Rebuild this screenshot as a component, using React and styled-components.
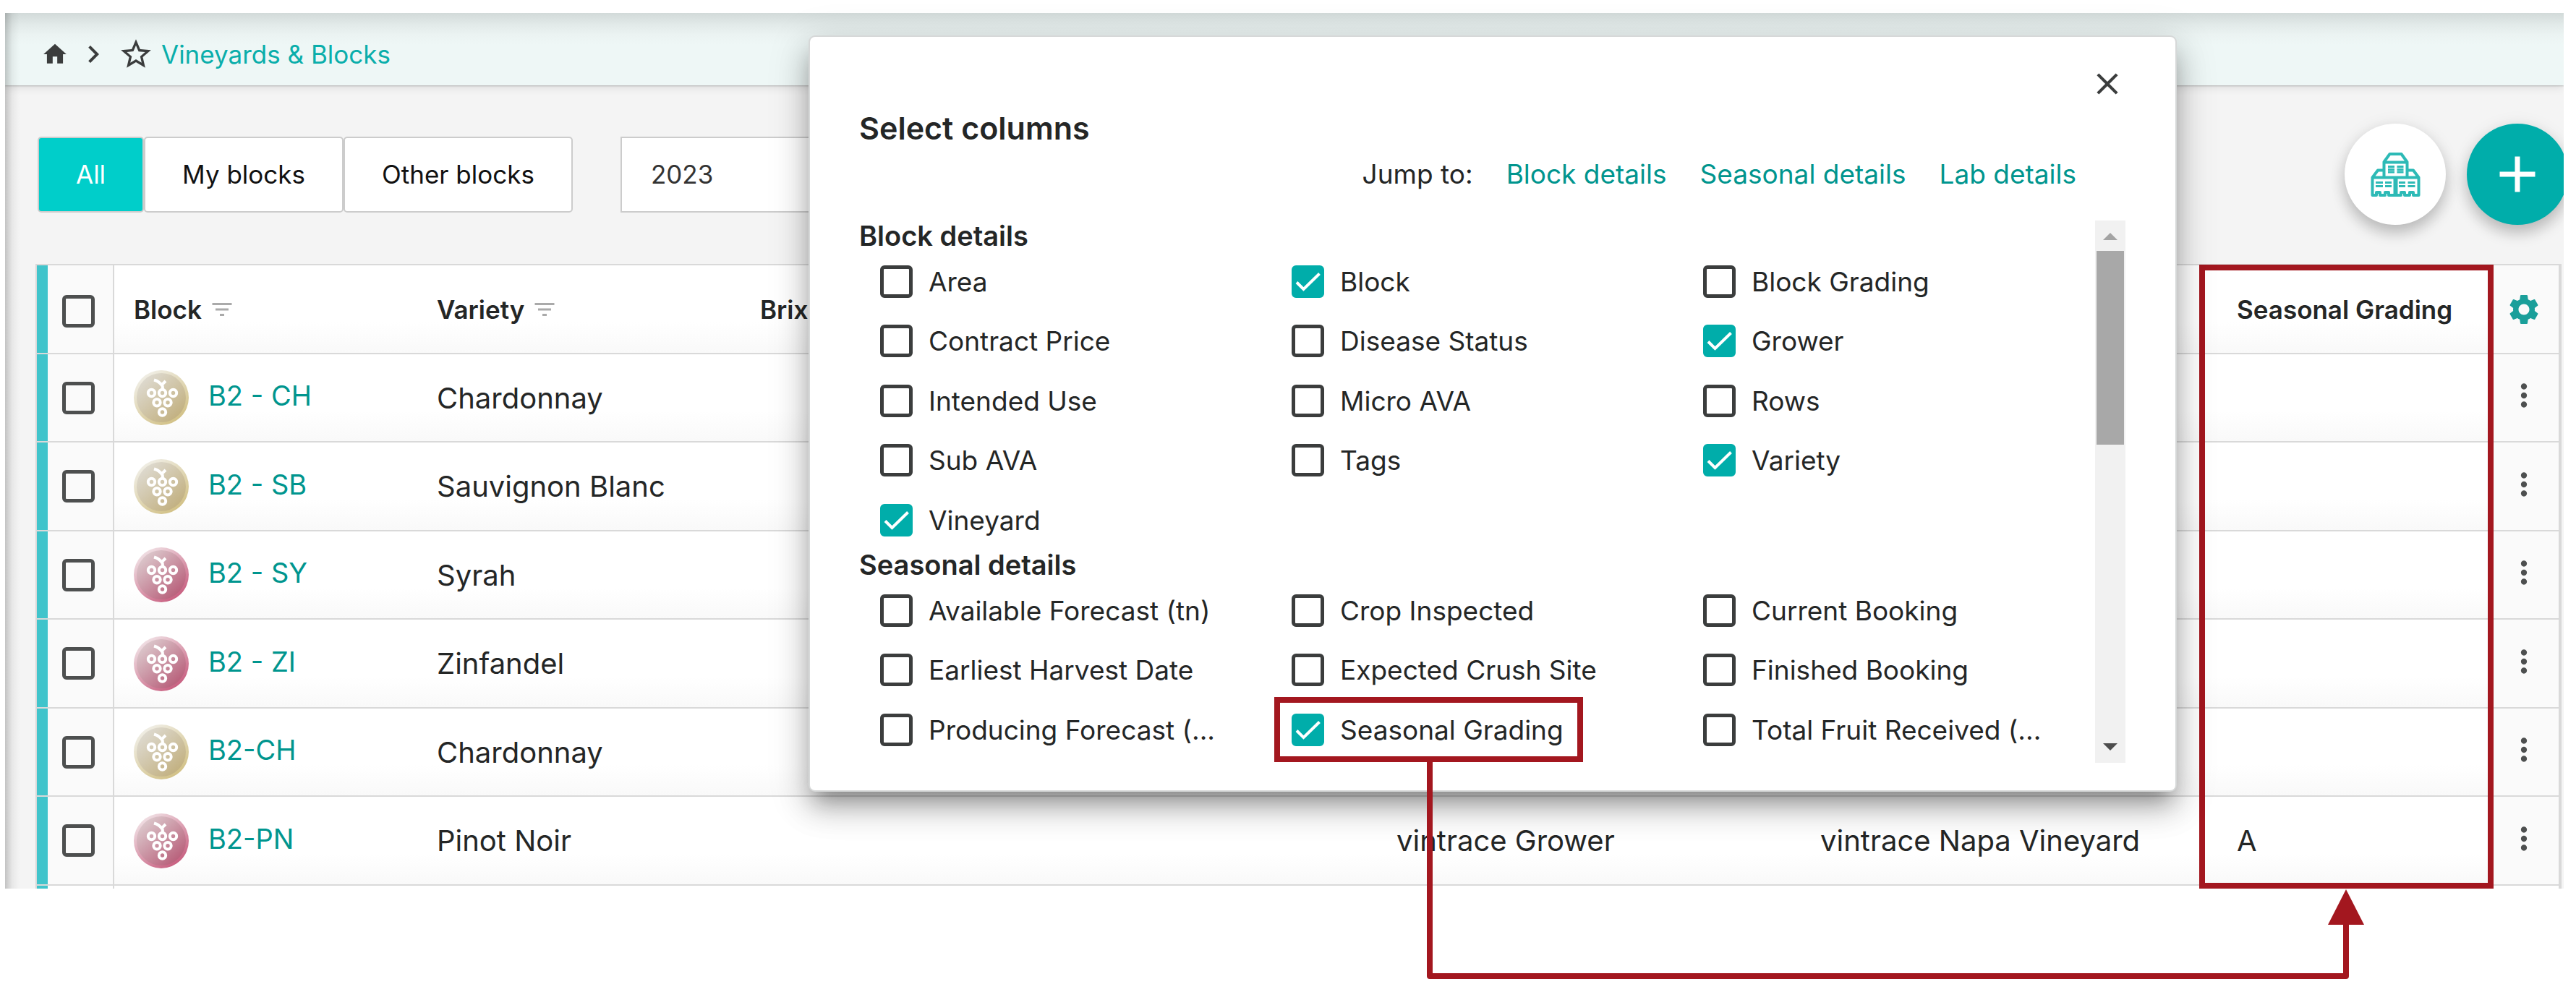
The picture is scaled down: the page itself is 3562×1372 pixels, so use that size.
import React, { useState } from 'react';
import styled, { createGlobalStyle } from 'styled-components';
import { MdHome, MdChevronRight, MdStarBorder, MdFilterList, MdSettings, MdMoreVert, MdClose, MdAdd } from 'react-icons/md';

const GlobalStyle = createGlobalStyle`
  * { box-sizing: border-box; }
  body { margin: 0; background: #fff; color: #242626; font-family: Inter, 'Open Sans', sans-serif; font-size: 37px; }
  button, select, input { font: inherit; color: inherit; margin: 0; }
  a { color: #00958e; text-decoration: none; }
  svg { display: block; flex: none; }
`;

const Page = styled.div`position: relative; padding: 18px 17px 143px 7px;`;
const Screen = styled.div`
  position: relative; overflow: hidden; background: #f4f4f4;
  &::after { content: ''; position: absolute; inset: 0 auto 0 0; width: 20px; pointer-events: none; background: linear-gradient(to right, rgba(0, 0, 0, 0.2), rgba(0, 0, 0, 0.05) 50%, transparent); }
`;

// --- BREADCRUMB BAR ---
const TopBar = styled.nav`
  display: flex; align-items: center; gap: 10px; height: 100px; padding: 14px 50px 0; color: #3b3d3d; font-size: 35px;
  background: linear-gradient(#d2dad9, #e2eae9 16px, #ebf3f2 30px, #eef7f6 44px);
  box-shadow: 0 1px 2px rgba(0, 0, 0, 0.2), 0 2px 12px rgba(0, 0, 0, 0.12);
`;
const CrumbLink = styled.a`color: ${({ $muted }) => ($muted ? '#3b3d3d' : '#0aaeab')};`;

// --- TOOLBAR ---
const Toolbar = styled.div`display: flex; align-items: center; padding: 53px 0 54px 45px;`;
const Segments = styled.div`display: flex; margin-right: 66px;`;
const Segment = styled.button`
  height: 105px; padding: 0 51px; border: 2px solid #ccc; border-radius: 5px; font-size: 35px;
  background: ${({ $active }) => ($active ? '#00ceca' : '#fff')};
  color: ${({ $active }) => ($active ? '#fff' : '#111')};
`;
const YearSelect = styled.select`appearance: none; width: 520px; height: 105px; padding: 0 40px; border: 2px solid #ccc; border-radius: 0; background: #fff; font-size: 35px; color: #333;`;
const Fabs = styled.div`display: flex; gap: 29px; margin-left: auto; margin-right: -6px;`;
const Fab = styled.button`
  display: flex; align-items: center; justify-content: center; width: 140px; height: 140px; padding: 0; border: 0; border-radius: 50%; color: #fff;
  background: ${({ $primary }) => ($primary ? '#00adaa' : '#fff')};
  box-shadow: 0 12px 20px rgba(0, 0, 0, 0.2), 0 2px 24px rgba(0, 0, 0, 0.08);
`;

// --- TABLE ---
const TableArea = styled.div`position: relative; margin: 0 3px 0 42px;`;
const Table = styled.table`width: 100%; table-layout: fixed; border-collapse: separate; border-spacing: 0; border: 2px solid #d9d9d9; border-right-width: 4px; border-bottom: 0;`;
const Row = styled.tr`height: ${({ $head }) => ($head ? 123 : 122)}px; &:nth-child(even) { height: 123px; }`;
const Cell = styled.td`
  padding: 0 0 0 27px; text-align: left; white-space: nowrap; border-bottom: 2px solid #d9d9d9; font-size: 40px;
  background: linear-gradient(#fff 65%, #f9f9f9);
`;
const HeadCell = styled(Cell)`font-size: 35px; font-weight: 600;`;
const CheckCell = styled.td`padding: ${({ $head }) => ($head ? 6 : 0)}px 0 0 35px; background: #fafafa; border: solid #d9d9d9; border-width: 0 2px 2px 0; box-shadow: inset 15px 0 #40c4cb;`;
const ActionCell = styled.td`padding: 0 0 ${({ $head }) => ($head ? 0 : 6)}px; background: #fafafa; border-bottom: 2px solid #d9d9d9;`;
const EdgeRow = styled.tr`height: 4px; td { border-bottom: 0; padding: 0; background: #fff; }`;
const HeadLabel = styled.div`display: flex; align-items: center; gap: 10px; svg { color: #aaa; }`;
const BlockName = styled.div`display: flex; align-items: center; gap: 27px; font-size: 38px; a { padding-bottom: 6px; }`;
const IconButton = styled.button`display: flex; align-items: center; justify-content: center; width: 50px; height: 50px; margin: 0 auto; padding: 0; border: 0; background: none; color: ${({ $color }) => $color || '#4d4f4f'};`;
const ColumnOutline = styled.div`position: absolute; top: 1px; right: 94px; bottom: 0; width: 407px; border: 8px solid #a3171f; pointer-events: none;`;

// --- CHECKBOX ---
const TickWrap = styled.span`display: grid; flex: none; width: 45px; > * { grid-area: 1 / 1; } svg { pointer-events: none; }`;
const TickInput = styled.input`
  appearance: none; width: 45px; height: 45px; border: 5px solid ${({ $soft }) => ($soft ? '#4d4f4f' : '#3b3d3d')}; border-radius: 6px; background: transparent;
  &:checked { background: #00adaa; border-color: #00adaa; }
`;

// --- DIALOG ---
const Dialog = styled.section`
  position: absolute; top: 49px; left: 1118px; right: 552px; padding: 40px 69px 38px 68px; background: #fff; border: 2px solid #d6d8d8; border-radius: 9px;
  box-shadow: 0 20px 26px -12px rgba(0, 0, 0, 0.3), 0 24px 40px 2px rgba(0, 0, 0, 0.18), 0 12px 56px 6px rgba(0, 0, 0, 0.12);
`;
const DialogTop = styled.div`display: flex; justify-content: flex-end; ${IconButton} { margin: 0; }`;
const DialogTitle = styled.h2`margin: 12px 0 0; font-size: 43px; line-height: 48px; font-weight: 600;`;
const JumpRow = styled.div`display: flex; justify-content: flex-end; gap: 46px; margin-top: 18px; padding-right: 68px; line-height: 44px;`;
const DialogBody = styled.div`display: flex; justify-content: space-between; margin-top: 42px;`;
const Groups = styled.div`flex: 1;`;
const GroupTitle = styled.h3`margin: 0; font-size: 38px; line-height: 43px; font-weight: 600;`;
const OptionGrid = styled.div`display: grid; grid-template-columns: 569px 569px 1fr; grid-auto-rows: 82px 83px; padding-left: 29px;`;
const Option = styled.label`display: flex; align-items: center; gap: 22px; position: relative; white-space: nowrap;`;
const OptionOutline = styled.span`position: absolute; top: -4px; bottom: -4px; left: -24px; width: 427px; border: 8px solid #a3171f; pointer-events: none;`;
const ScrollTrack = styled.div`display: flex; flex-direction: column; align-items: center; width: 42px; height: 750px; padding: 17px 2px; background: #f1f1f1;`;
const ScrollThumb = styled.div`align-self: stretch; height: 268px; margin: 15px 0 auto; background: #a8a8a8;`;

const Connector = styled.svg`position: absolute; top: 1054px; left: 1973px; pointer-events: none;`;

const rows = [
  { name: 'B2 - CH', variety: 'Chardonnay', white: true },
  { name: 'B2 - SB', variety: 'Sauvignon Blanc', white: true },
  { name: 'B2 - SY', variety: 'Syrah' },
  { name: 'B2 - ZI', variety: 'Zinfandel' },
  { name: 'B2-CH', variety: 'Chardonnay', white: true },
  { name: 'B2-PN', variety: 'Pinot Noir', grower: 'vintrace Grower', vineyard: 'vintrace Napa Vineyard', grading: 'A' },
];

const groups = [
  {
    title: 'Block details',
    options: ['Area', 'Block', 'Block Grading', 'Contract Price', 'Disease Status', 'Grower', 'Intended Use', 'Micro AVA', 'Rows', 'Sub AVA', 'Tags', 'Variety', 'Vineyard'],
  },
  {
    title: 'Seasonal details',
    options: ['Available Forecast (tn)', 'Crop Inspected', 'Current Booking', 'Earliest Harvest Date', 'Expected Crush Site', 'Finished Booking', 'Producing Forecast (...', 'Seasonal Grading', 'Total Fruit Received (...'],
  },
];

const Tick = ({ checked, ...props }) => (
  <TickWrap>
    <TickInput type="checkbox" checked={checked} {...props} />
    {checked && (
      <svg width="45" height="45" viewBox="0 0 45 45" fill="none" stroke="#fff" strokeWidth="4">
        <path d="M7 23.5 16.5 33 38.5 11.5" />
      </svg>
    )}
  </TickWrap>
);

const GrapeIcon = ({ white }) => {
  const id = white ? 'grape-white' : 'grape-red';
  const [from, to, rimFrom, rimTo] = white ? ['#dedad0', '#c2b080', '#f0eee6', '#d2c186'] : ['#dcc8cc', '#b85f7a', '#f0e0e4', '#c85f80'];
  return (
    <svg width="76" height="76" viewBox="0 0 76 76">
      <defs>
        <linearGradient id={id} x1="0.15" y1="0.1" x2="0.85" y2="0.9"><stop stopColor={from} /><stop offset="1" stopColor={to} /></linearGradient>
        <linearGradient id={`${id}-rim`} x1="0.15" y1="0.1" x2="0.75" y2="0.95"><stop stopColor={rimFrom} /><stop offset="1" stopColor={rimTo} /></linearGradient>
      </defs>
      <circle cx="38" cy="38" r="38" fill={`url(#${id}-rim)`} />
      <circle cx="38" cy="38" r="34" fill={`url(#${id})`} />
      <g fill="none" stroke="#fff" strokeWidth="4">
        <path d="M28 13.500C33 15 36 17 38.500 20.500L44 15M38.500 19C39.500 21 40 23 40 26" />
        <circle cx="24.500" cy="31.500" r="4.700" />
        <circle cx="39.500" cy="31.500" r="4.700" />
        <circle cx="54.500" cy="31.500" r="4.700" />
        <circle cx="32" cy="44.700" r="4.700" />
        <circle cx="47" cy="44.700" r="4.700" />
        <circle cx="39.500" cy="58" r="4.700" />
      </g>
    </svg>
  );
};

const WineryIcon = () => (
  <svg width="69" height="61" viewBox="0 0 69 61" fill="none" stroke="#2dbab6" strokeWidth="4" strokeLinejoin="round">
    <path d="M18.500 33V13L26.500 2H42.500L50.500 13V33M18.500 13.500H50.500" />
    <path d="M18 24.500H10L2.500 34.500V59H8V55H13V59H20V55H25V59H42V55H47V59H54V55H59V59H66.500V34.500L59 24.500H51M2.500 34.500H66.500" />
    <path d="M34.500 34V59" strokeWidth="6" />
    <path d="M24 19.500H33M24 23.500H33M24 27H33M36.500 19.500H45.500M36.500 23.500H45.500M36.500 27H45.500" strokeWidth="3" />
    <path d="M7 41.500H17M20 41.500H29M7 46.500H17M20 46.500H29M39 41.500H48M51.500 41.500H61.500M39 46.500H48M51.500 46.500H61.500" strokeWidth="3" />
  </svg>
);

const Arrow = ({ up }) => (
  <svg width="20" height="10" viewBox="0 0 20 10" fill={up ? '#a3a3a3' : '#4d4d4d'}>
    <path d={up ? 'M0 10 10 0 20 10Z' : 'M0 0H20L10 10Z'} />
  </svg>
);

const App = () => {
  const [segment, setSegment] = useState('All');
  const [columns, setColumns] = useState(['Block', 'Grower', 'Variety', 'Vineyard', 'Seasonal Grading']);
  const [picked, setPicked] = useState([]);

  const flip = (list, item) => (list.includes(item) ? list.filter((x) => x !== item) : [...list, item]);

  return (
    <>
      <GlobalStyle />
      <Page>
        <Screen>
          <TopBar>
            <CrumbLink href="#home" aria-label="Home" $muted><MdHome size={38} /></CrumbLink>
            <MdChevronRight size={48} />
            <MdStarBorder size={50} />
            <CrumbLink href="#blocks">Vineyards &amp; Blocks</CrumbLink>
          </TopBar>

          <Toolbar>
            <Segments>
              {['All', 'My blocks', 'Other blocks'].map((label) => (
                <Segment key={label} type="button" $active={segment === label} onClick={() => setSegment(label)}>{label}</Segment>
              ))}
            </Segments>
            <YearSelect aria-label="Vintage" defaultValue="2023"><option>2023</option></YearSelect>
            <Fabs>
              <Fab type="button" aria-label="Wineries"><WineryIcon /></Fab>
              <Fab type="button" aria-label="Add block" $primary><MdAdd size={84} /></Fab>
            </Fabs>
          </Toolbar>

          <TableArea>
            <Table>
              <colgroup>
                <col width="107" /><col width="419" /><col width="447" /><col /><col width="586" /><col width="576" /><col width="375" /><col width="97" />
              </colgroup>
              <thead>
                <Row $head>
                  <CheckCell $head as="th">
                    <Tick $soft aria-label="Select all blocks" checked={picked.length === rows.length} onChange={() => setPicked(picked.length === rows.length ? [] : rows.map((r) => r.name))} />
                  </CheckCell>
                  <HeadCell as="th"><HeadLabel>Block <MdFilterList size={36} /></HeadLabel></HeadCell>
                  <HeadCell as="th"><HeadLabel>Variety <MdFilterList size={36} /></HeadLabel></HeadCell>
                  <HeadCell as="th">Brix</HeadCell>
                  <HeadCell />
                  <HeadCell />
                  <HeadCell as="th">Seasonal Grading</HeadCell>
                  <ActionCell $head><IconButton type="button" aria-label="Table settings" $color="#1a9f9a"><MdSettings size={50} /></IconButton></ActionCell>
                </Row>
              </thead>
              <tbody>
                {rows.map((row) => (
                  <Row key={row.name}>
                    <CheckCell>
                      <Tick $soft aria-label={`Select ${row.name}`} checked={picked.includes(row.name)} onChange={() => setPicked(flip(picked, row.name))} />
                    </CheckCell>
                    <Cell><BlockName><GrapeIcon white={row.white} /><a href="#block">{row.name}</a></BlockName></Cell>
                    <Cell>{row.variety}</Cell>
                    <Cell />
                    <Cell>{row.grower}</Cell>
                    <Cell>{row.vineyard}</Cell>
                    <Cell>{row.grading}</Cell>
                    <ActionCell><IconButton type="button" aria-label={`Actions for ${row.name}`}><MdMoreVert size={50} /></IconButton></ActionCell>
                  </Row>
                ))}
                <EdgeRow><CheckCell /><td colSpan={6} /><ActionCell /></EdgeRow>
              </tbody>
            </Table>
            <ColumnOutline />
          </TableArea>
        </Screen>

        <Dialog role="dialog" aria-labelledby="columns-title">
          <DialogTop>
            <IconButton type="button" aria-label="Close" $color="#3b3d3d"><MdClose size={50} /></IconButton>
          </DialogTop>
          <DialogTitle id="columns-title">Select columns</DialogTitle>
          <JumpRow>
            <span>Jump to:</span>
            <a href="#block-details">Block details</a>
            <a href="#seasonal-details">Seasonal details</a>
            <a href="#lab-details">Lab details</a>
          </JumpRow>
          <DialogBody>
            <Groups>
              {groups.map((group) => (
                <React.Fragment key={group.title}>
                  <GroupTitle>{group.title}</GroupTitle>
                  <OptionGrid>
                    {group.options.map((name) => (
                      <Option key={name}>
                        <Tick checked={columns.includes(name)} onChange={() => setColumns(flip(columns, name))} />
                        {name}
                        {name === 'Seasonal Grading' && <OptionOutline />}
                      </Option>
                    ))}
                  </OptionGrid>
                </React.Fragment>
              ))}
            </Groups>
            <ScrollTrack>
              <Arrow up />
              <ScrollThumb />
              <Arrow />
            </ScrollTrack>
          </DialogBody>
        </Dialog>

        {/* ties the ticked option to its new column */}
        <Connector width="1296" height="300" viewBox="0 0 1296 300">
          <path d="M4 0V296H1271V220" fill="none" stroke="#a3171f" strokeWidth="8" strokeLinejoin="round" />
          <path d="M1271 176 1296 225H1246Z" fill="#a3171f" />
        </Connector>
      </Page>
    </>
  );
};

export default App;
